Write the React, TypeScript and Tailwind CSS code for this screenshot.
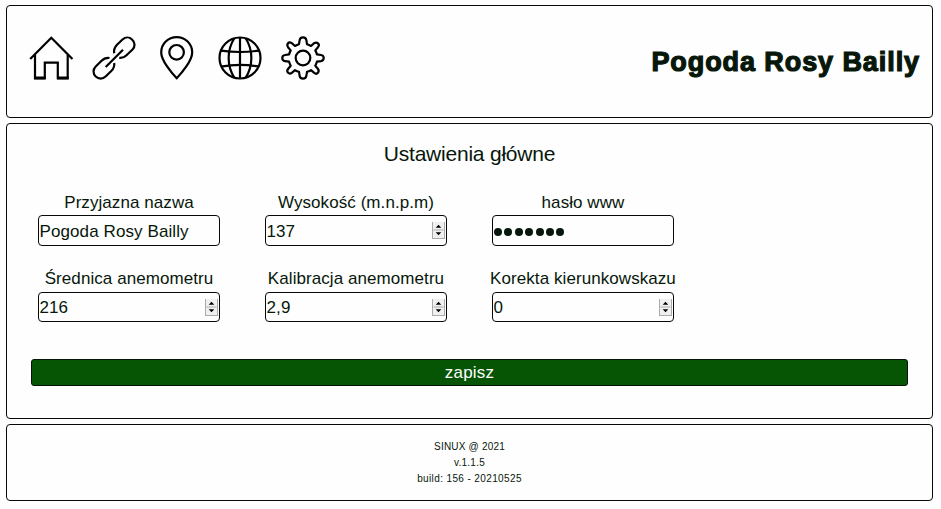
import React from 'react';

const iconProps = {
  viewBox: '0 0 44 44',
  fill: 'none',
  stroke: '#000',
  strokeWidth: 2.2,
  className: 'block h-[44px] w-[44px]',
};

function HomeIcon() {
  return (
    <svg {...iconProps}>
      <path d="M1.2 23 22.3 1.8 43.4 23" />
      <path d="M6 19V42.2H15.8V26.7H28.8V42.2H38.7V19" />
      <path d="M5 42H16.5M28 42H39.5" strokeWidth="2.8" />
    </svg>
  );
}

function LinkIcon() {
  return (
    <svg {...iconProps}>
      <path d="M22.2 17.2C21.5 13.5 22.5 11.5 25 8.8L30.5 3.5C33.5.8 37.5.8 40 3.5C43.3 6.3 43.3 10.5 40.5 13.5L34.5 19.3C32.5 21.4 30.5 22.1 27.3 21.8" />
      <path d="M17.5 22C13.8 21.5 11.8 22.5 9.3 25L3.7 30.5C.8 33.5 .8 37.8 3.7 40.5C6.6 43.3 10.8 43.3 13.6 40.5L19.3 35C22 32.3 22.7 30.3 22.2 27" />
      <path d="M13.7 31 31 13.7" />
    </svg>
  );
}

function PinIcon() {
  return (
    <svg {...iconProps}>
      <path d="M21.7 42.2C16.7 37 6.2 24.5 6.2 16.4A15.5 15.3 0 0 1 37.2 16.4C37.2 24.5 26.7 37 21.7 42.2Z" />
      <circle cx="21.6" cy="16.3" r="7.3" />
    </svg>
  );
}

function GlobeIcon() {
  return (
    <svg {...iconProps}>
      <circle cx="22" cy="22" r="20.5" />
      <path d="M22 1V43M16.5 2C8.7 14 8.7 30 16.5 42M27.5 2C35.3 14 35.3 30 27.5 42" />
      <path d="M3 14.6Q22 17.4 41 14.6M3 30.6Q22 27.2 41 30.6" />
    </svg>
  );
}

function GearIcon() {
  return (
    <svg {...iconProps} strokeLinejoin="round">
      <path d="M18.6 4.3Q19 1.3 22 1.3T25.4 4.3L26 8.2Q28 8.8 30 10L33.2 7.2Q35.2 5.8 37 7.3T37 11.2L34.3 14.4Q35.3 16.2 35.9 18.4L40 19Q42.7 19.4 42.7 22T40 25.1L35.9 25.7Q35.3 27.8 34.3 29.7L37 33Q38.4 35 36.9 36.8T33.2 36.9L30 34.2Q28 35.3 26 35.8L25.4 39.7Q25 42.7 22 42.7T18.6 39.7L18 35.8Q16 35.3 14 34.2L10.8 36.9Q8.8 38.4 7.1 36.8T7 33L9.7 29.7Q8.7 27.8 8.1 25.7L4 25.1Q1.3 24.7 1.3 22T4 19L8.1 18.4Q8.7 16.2 9.7 14.4L7 11.2Q5.6 9.1 7 7.3T10.8 7.2L14 10Q16 8.8 18 8.2Z" />
      <circle cx="22" cy="22" r="7.3" />
    </svg>
  );
}

function Spinner() {
  return (
    <span className="flex h-[17px] w-[13px] flex-col border border-t-0 border-[#aaa] bg-[#f0f0f0]">
      <svg viewBox="0 0 11 17" className="block h-[17px] w-[11px]">
        <path d="M0 8.5H11" stroke="#aaa" strokeWidth="1" />
        <path d="M2.5 6H8.5L5.5 3ZM2.5 11H8.5L5.5 14Z" fill="#000" />
      </svg>
    </span>
  );
}

type FieldProps = {
  label: string;
  value: string;
  number?: boolean;
  password?: boolean;
  short?: boolean;
};

function Field({ label, value, number, password, short }: FieldProps) {
  return (
    <label className="flex w-[227px] flex-col items-center">
      <span
        className={`pl-px text-[17px] leading-[20px] tracking-[0.07px] whitespace-nowrap ${short ? 'h-[23px]' : 'h-[22px]'}`}
      >
        {label}
      </span>
      <span
        className={`flex w-[182px] items-center justify-between rounded-[4px] border border-[#080808] pr-px pl-px text-[17px] ${short ? 'h-[30px]' : 'h-[31px]'}`}
      >
        {password ? (
          <span className="flex gap-[2.4px] pt-[3px] pl-[0.5px]">
            {value.split('').map((_, i) => (
              <span key={i} className="h-[8px] w-[8px] rounded-full bg-[#07170a]" />
            ))}
          </span>
        ) : (
          <span className="pt-[2px] leading-[20px] tracking-[0.1px]">{value}</span>
        )}
        {number && <Spinner />}
      </span>
    </label>
  );
}

export default function App() {
  return (
    <div className="flex h-[509px] w-[941px] flex-col gap-[5px] bg-[#fefefe] pt-[5px] pl-[6px] font-['Liberation_Sans',Arial,sans-serif] text-[#07170a]">
      <header className="flex h-[113px] w-[927px] justify-between rounded-[4px] border border-[#080808] pr-[12px] pl-[22px]">
        <nav className="flex gap-[19px] pt-[30px]">
          <HomeIcon />
          <LinkIcon />
          <PinIcon />
          <GlobeIcon />
          <GearIcon />
        </nav>
        <h1 className="pt-[40px] text-[27px] leading-[32px] font-bold tracking-[0.92px] [-webkit-text-stroke:1.2px_#07170a]">
          Pogoda Rosy Bailly
        </h1>
      </header>
      <main className="flex h-[296px] w-[927px] flex-col rounded-[4px] border border-[#080808] px-[24px]">
        <h2 className="pt-[18px] text-center text-[21px] leading-[24px] tracking-[-0.22px]">Ustawienia główne</h2>
        <div className="-ml-[16px] flex pt-[27px]">
          <Field label="Przyjazna nazwa" value="Pogoda Rosy Bailly" />
          <Field label="Wysokość (m.n.p.m)" value="137" number />
          <Field label="hasło www" value="•••••••" password />
        </div>
        <div className="-ml-[16px] flex pt-[23px]">
          <Field label="Średnica anemometru" value="216" number short />
          <Field label="Kalibracja anemometru" value="2,9" number short />
          <Field label="Korekta kierunkowskazu" value="0" number short />
        </div>
        <button className="mt-[37px] h-[27px] w-[877px] rounded-[3px] border border-[#081408] bg-[#055505] text-[17px] leading-[24px] tracking-[0.2px] text-white">
          zapisz
        </button>
      </main>
      <footer className="flex h-[77px] w-[927px] flex-col items-center rounded-[4px] border border-[#080808] pt-[14px] text-[10px] leading-[16px]">
        <span className="tracking-[0.2px]">SINUX @ 2021</span>
        <span className="tracking-[0.25px]">v.1.1.5</span>
        <span className="tracking-[0.38px]">build: 156 - 20210525</span>
      </footer>
    </div>
  );
}
